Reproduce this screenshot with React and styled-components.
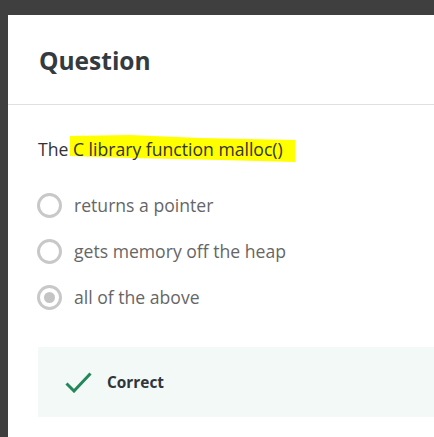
import React from "react";
import styled, { createGlobalStyle } from "styled-components";

const Global = createGlobalStyle`
  html, body { margin: 0; padding: 0; background: #3f3f3f; overflow: hidden; }
  body { width: 434px; height: 437px; }
  #root { width: 434px; height: 437px; }
`;

const Frame = styled.div`
  width: 434px;
  height: 437px;
  box-sizing: border-box;
  padding: 15px 0 0 8px;
  background: #3f3f3f;
  overflow: hidden;
`;

const Panel = styled.div`
  width: 520px;
  height: 100%;
  background: #fff;
  font-family: "Open Sans", "Liberation Sans", sans-serif;
`;

const Header = styled.div`
  height: 90px;
  box-sizing: border-box;
  padding: 30px 0 0 31px;
  border-bottom: 1px solid #e0e0e0;
`;

const Title = styled.h1`
  margin: 0;
  font-size: 24.5px;
  font-weight: 700;
  color: #333a40;
  line-height: 32px;
`;

const Body = styled.div`
  padding: 31px 0 0 30px;
`;

const Prompt = styled.p`
  margin: 0;
  font-size: 17.6px;
  line-height: 26px;
  color: #333;
`;

const Marked = styled.span`
  position: relative;
  z-index: 0;
`;

const Marker = styled.svg`
  position: absolute;
  left: -2px;
  top: -5px;
  z-index: -1;
  overflow: visible;
`;

const Options = styled.div`
  display: flex;
  flex-direction: column;
  gap: 20px;
  margin-top: 30px;
`;

const Option = styled.label`
  display: flex;
  align-items: center;
  gap: 12px;
  font-size: 17.6px;
  line-height: 26px;
  color: #666;
`;

const Radio = styled.span`
  width: 25px;
  height: 25px;
  box-sizing: border-box;
  border-radius: 50%;
  border: 3px solid #c8c8c8;
  display: flex;
  align-items: center;
  justify-content: center;
  margin-left: -1px;
  &::after {
    content: "";
    width: 11px;
    height: 11px;
    border-radius: 50%;
    background: ${(p) => (p.$checked ? "#c4c4c4" : "transparent")};
  }
`;

const Feedback = styled.div`
  margin-top: 37px;
  height: 70px;
  display: flex;
  align-items: center;
  gap: 15px;
  padding-left: 27px;
  background: #f3f9f7;
`;

const FeedbackText = styled.span`
  font-size: 15.4px;
  font-weight: 700;
  color: #2f353b;
`;

const options = [
  { label: "returns a pointer", checked: false },
  { label: "gets memory off the heap", checked: false },
  { label: "all of the above", checked: true },
];

export default function App() {
  return (
    <>
      <Global />
      <Frame>
        <Panel>
          <Header>
            <Title>Question</Title>
          </Header>
          <Body>
            <Prompt>
              The
              <Marked>
                {" "}
                <Marker width="230" height="30" viewBox="0 0 230 30">
                  <polygon
                    points="4,4 64,3 134,6 229,8 229,30 154,28 64,26 4,24"
                    fill="#ffff00"
                  />
                </Marker>
                C library function malloc()
              </Marked>
            </Prompt>
            <Options>
              {options.map((o) => (
                <Option key={o.label}>
                  <Radio $checked={o.checked} />
                  {o.label}
                </Option>
              ))}
            </Options>
            <Feedback>
              <svg width="27" height="21" viewBox="0 0 27 21">
                <path d="M1.5 11.5 L9 19 L25.5 1.5" fill="none" stroke="#24875a" strokeWidth="3" />
              </svg>
              <FeedbackText>Correct</FeedbackText>
            </Feedback>
          </Body>
        </Panel>
      </Frame>
    </>
  );
}
